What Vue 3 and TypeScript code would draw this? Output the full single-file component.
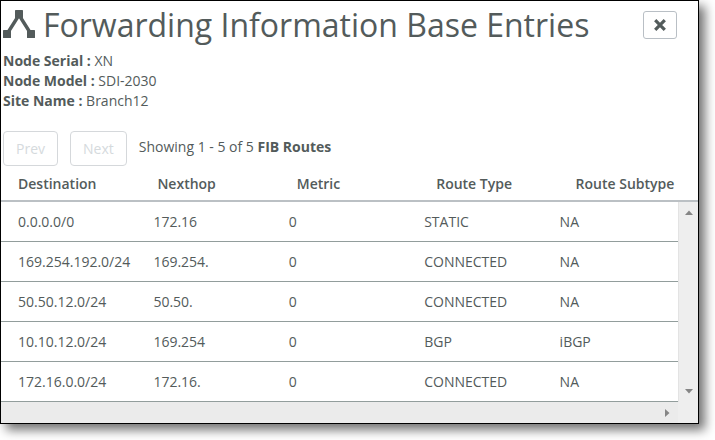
<script setup lang="ts">
interface Route {
  destination: string
  nexthop: string
  metric: number
  type: string
  subtype: string
}

const details: { label: string; value: string }[] = [
  { label: 'Node Serial', value: 'XN' },
  { label: 'Node Model', value: 'SDI-2030' },
  { label: 'Site Name', value: 'Branch12' },
]

const columns: string[] = ['Destination', 'Nexthop', 'Metric', 'Route Type', 'Route Subtype']

const routes: Route[] = [
  { destination: '0.0.0.0/0', nexthop: '172.16', metric: 0, type: 'STATIC', subtype: 'NA' },
  { destination: '169.254.192.0/24', nexthop: '169.254.', metric: 0, type: 'CONNECTED', subtype: 'NA' },
  { destination: '50.50.12.0/24', nexthop: '50.50.', metric: 0, type: 'CONNECTED', subtype: 'NA' },
  { destination: '10.10.12.0/24', nexthop: '169.254', metric: 0, type: 'BGP', subtype: 'iBGP' },
  { destination: '172.16.0.0/24', nexthop: '172.16.', metric: 0, type: 'CONNECTED', subtype: 'NA' },
]
</script>

<template>
  <main class="dialog">
    <header class="head">
      <svg class="logo" width="32" height="28" viewBox="0 0 32 28" aria-hidden="true">
        <path d="M4 24 16 5 28 24" fill="none" stroke="currentColor" stroke-width="3.4" />
        <rect x="12" y="0" width="8" height="8" rx="0.6" fill="currentColor" />
        <rect x="0" y="20" width="8" height="8" rx="0.6" fill="currentColor" />
        <rect x="24" y="20" width="8" height="8" rx="0.6" fill="currentColor" />
      </svg>
      <h1>Forwarding Information Base Entries</h1>
      <button class="close" type="button" aria-label="Close">
        <svg width="12" height="12" viewBox="0 0 12 12" aria-hidden="true">
          <path d="M1.2 1.2 10.8 10.8M10.8 1.2 1.2 10.8" stroke="currentColor" stroke-width="3.2" />
        </svg>
      </button>
    </header>

    <div class="details">
      <div v-for="d in details" :key="d.label"><b>{{ d.label }} :</b> {{ d.value }}</div>
    </div>

    <nav class="pager">
      <button type="button" disabled>Prev</button>
      <button type="button" disabled>Next</button>
      <span>Showing 1 - 5 of 5 <b>FIB Routes</b></span>
    </nav>

    <div class="grid">
      <table>
        <thead>
          <tr>
            <th v-for="c in columns" :key="c" scope="col">{{ c }}</th>
          </tr>
        </thead>
        <tbody>
          <tr v-for="r in routes" :key="r.destination">
            <td>{{ r.destination }}</td>
            <td>{{ r.nexthop }}</td>
            <td>{{ r.metric }}</td>
            <td>{{ r.type }}</td>
            <td>{{ r.subtype }}</td>
          </tr>
        </tbody>
      </table>
      <div class="vbar" aria-hidden="true">
        <svg width="8" height="5" viewBox="0 0 8 5"><path d="M0 5 4 0.5 8 5Z" fill="#858585" /></svg>
        <svg width="8" height="5" viewBox="0 0 8 5"><path d="M0 0 4 4.5 8 0Z" fill="#858585" /></svg>
      </div>
      <div class="hbar" aria-hidden="true">
        <svg width="5" height="8" viewBox="0 0 5 8"><path d="M0 0 4.5 4 0 8Z" fill="#858585" /></svg>
      </div>
      <div class="corner"></div>
    </div>
  </main>
</template>

<style>
body {
  background: #fff;
}
</style>

<style scoped>
.dialog {
  box-sizing: border-box;
  margin: 0 16px 16px 0;
  border: 1px solid #000;
  background: #fff;
  box-shadow: 6px 6px 10px rgba(0, 0, 0, 0.55);
  color: #535b5b;
  font: 14px/20px "Open Sans", "Noto Sans", sans-serif;
}

.head {
  display: flex;
  align-items: center;
  gap: 8px;
  height: 48px;
  padding: 0 21px 0 2px;
}

.logo {
  flex: none;
  margin-bottom: 2px;
}

h1 {
  flex: 1;
  margin: 0;
  font-size: 32px;
  line-height: 48px;
  font-weight: 400;
  white-space: nowrap;
}

.close {
  display: flex;
  align-items: center;
  justify-content: center;
  width: 34px;
  height: 28px;
  padding: 0;
  border: 1px solid #b9bfc5;
  border-radius: 3px;
  background: #fff;
  color: inherit;
}

.details {
  padding: 2px 2px 0;
}

b {
  font-weight: 700;
}

.pager {
  display: flex;
  align-items: center;
  gap: 12px;
  padding: 20px 2px 0;
}

.pager button {
  height: 35px;
  padding: 0 12px;
  border: 1px solid #d5d8db;
  border-radius: 4px;
  background: #fff;
  color: #d5dadd;
  font: inherit;
}

.pager span {
  padding-bottom: 4px;
}

.grid {
  display: grid;
  grid-template-columns: minmax(0, 1fr) 20px;
}

table {
  display: contents;
}

thead {
  display: block;
  grid-column: 1 / -1;
  border-bottom: 2px solid #bbc0c4;
}

tbody {
  display: block;
}

tr {
  display: grid;
  grid-template-columns: repeat(5, minmax(0, 1fr));
}

th,
td {
  padding: 0 0 0 17px;
  text-align: left;
  white-space: nowrap;
}

th {
  padding-top: 2px;
  font-weight: 600;
  line-height: 32px;
}

td {
  border-bottom: 1px solid #929d9c;
  line-height: 39px;
}

.vbar {
  display: flex;
  flex-direction: column;
  align-items: center;
  justify-content: space-between;
  padding: 8px 0;
  border-left: 1px solid #e3e3e3;
  background: #eee;
}

.hbar {
  display: flex;
  align-items: center;
  justify-content: flex-end;
  height: 21px;
  padding-right: 8px;
  background: #ebebeb;
}

.corner {
  background: #eee;
}
</style>
